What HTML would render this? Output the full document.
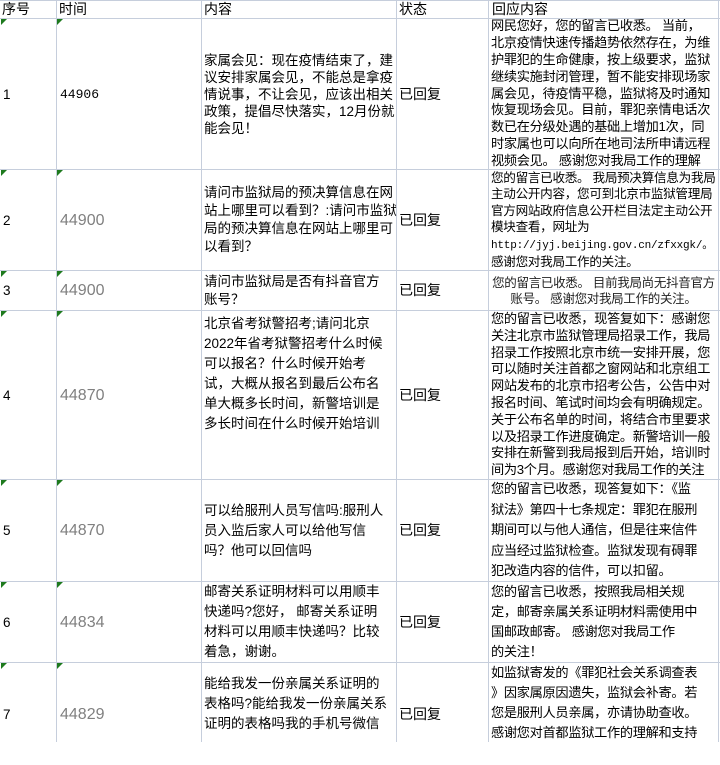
<!DOCTYPE html>
<html><head><meta charset="utf-8"><style>
body{margin:0;width:720px;height:742px;background:#fff;overflow:hidden;position:relative;font-family:"Liberation Sans","Noto Sans CJK SC",sans-serif;color:#000}
.h{position:absolute;left:0;width:720px;height:1px;background:#c6cedc}
.v{position:absolute;top:0;height:742px;width:1px;background:#c6cedc}
.c{position:absolute;display:flex;align-items:center;font-size:13.5px;line-height:17px;white-space:nowrap;overflow:hidden}
.t{position:absolute;width:0;height:0;border-top:6px solid #1e7a1e;border-right:6px solid transparent}
.g{color:#808080;font-size:16px}
.r{font-size:13.2px;letter-spacing:-0.3px;width:228px}
</style></head><body>
<div class="h" style="top:0"></div>
<div class="h" style="top:18px"></div>
<div class="h" style="top:169px"></div>
<div class="h" style="top:270px"></div>
<div class="h" style="top:310px"></div>
<div class="h" style="top:479px"></div>
<div class="h" style="top:581px"></div>
<div class="h" style="top:662px"></div>
<div class="v" style="left:56px"></div>
<div class="v" style="left:201px"></div>
<div class="v" style="left:396px"></div>
<div class="v" style="left:488px"></div>
<div class="v" style="left:718px"></div>

<div class="c" style="left:2px;top:0;height:18px;font-size:14px">序号</div>
<div class="c" style="left:59px;top:0;height:18px;font-size:14px">时间</div>
<div class="c" style="left:204px;top:0;height:18px;font-size:14px">内容</div>
<div class="c" style="left:399px;top:0;height:18px;font-size:14px">状态</div>
<div class="c" style="left:492px;top:0;height:18px;font-size:14px">回应内容</div>

<div class="t" style="left:1px;top:19px"></div><div class="t" style="left:57px;top:19px"></div>
<div class="t" style="left:1px;top:170px"></div><div class="t" style="left:57px;top:170px"></div>
<div class="t" style="left:1px;top:271px"></div><div class="t" style="left:57px;top:271px"></div>
<div class="t" style="left:1px;top:311px"></div><div class="t" style="left:57px;top:311px"></div>
<div class="t" style="left:1px;top:480px"></div><div class="t" style="left:57px;top:480px"></div>
<div class="t" style="left:1px;top:582px"></div><div class="t" style="left:57px;top:582px"></div>
<div class="t" style="left:1px;top:663px"></div><div class="t" style="left:57px;top:663px"></div>

<!-- row1 -->
<div class="c" style="left:3px;top:19px;height:150px">1</div>
<div class="c" style="left:60px;top:19px;height:150px;font-family:'Liberation Mono',monospace;font-size:13px">44906</div>
<div class="c" style="left:204px;top:19px;height:150px">家属会见：现在疫情结束了，建<br>议安排家属会见，不能总是拿疫<br>情说事，不让会见，应该出相关<br>政策，提倡尽快落实，12月份就<br>能会见！</div>
<div class="c" style="left:399px;top:19px;height:150px;font-size:14px">已回复</div>
<div class="c r" style="left:491px;top:19px;height:150px;line-height:16.8px">网民您好，您的留言已收悉。 当前，<br>北京疫情快速传播趋势依然存在，为维<br>护罪犯的生命健康，按上级要求，监狱<br>继续实施封闭管理，暂不能安排现场家<br>属会见，待疫情平稳，监狱将及时通知<br>恢复现场会见。目前，罪犯亲情电话次<br>数已在分级处遇的基础上增加1次，同<br>时家属也可以向所在地司法所申请远程<br>视频会见。 感谢您对我局工作的理解</div>

<!-- row2 -->
<div class="c" style="left:3px;top:170px;height:100px">2</div>
<div class="c g" style="left:60px;top:170px;height:100px">44900</div>
<div class="c" style="left:204px;top:170px;height:100px;line-height:18px">请问市监狱局的预决算信息在网<br>站上哪里可以看到？:请问市监狱<br>局的预决算信息在网站上哪里可<br>以看到？</div>
<div class="c" style="left:399px;top:170px;height:100px;font-size:14px">已回复</div>
<div class="c r" style="left:491px;top:170px;height:100px;line-height:16.5px;font-size:12.6px"><div>您的留言已收悉。 我局预决算信息为我局<br>主动公开内容，您可到北京市监狱管理局<br>官方网站政府信息公开栏目法定主动公开<br>模块查看，网址为<br><span style="font-family:'Liberation Mono',monospace;font-size:11px;letter-spacing:-0.2px">http://jyj.beijing.gov.cn/zfxxgk/。</span><br>感谢您对我局工作的关注。</div></div>

<!-- row3 -->
<div class="c" style="left:3px;top:271px;height:39px">3</div>
<div class="c g" style="left:60px;top:271px;height:39px">44900</div>
<div class="c" style="left:204px;top:271px;height:39px;line-height:18px">请问市监狱局是否有抖音官方<br>账号？</div>
<div class="c" style="left:399px;top:271px;height:39px;font-size:14px">已回复</div>
<div class="c" style="left:489px;top:271px;width:229px;height:39px;justify-content:center;text-align:center;font-size:12.5px;letter-spacing:-0.3px;line-height:16px;color:#222">您的留言已收悉。 目前我局尚无抖音官方<br>账号。 感谢您对我局工作的关注。</div>

<!-- row4 -->
<div class="c" style="left:3px;top:311px;height:168px">4</div>
<div class="c g" style="left:60px;top:311px;height:168px">44870</div>
<div class="c" style="left:204px;top:311px;height:168px;line-height:20px;align-items:flex-start;padding-top:3px">北京省考狱警招考;请问北京<br>2022年省考狱警招考什么时候<br>可以报名？什么时候开始考<br>试，大概从报名到最后公布名<br>单大概多长时间，新警培训是<br>多长时间在什么时候开始培训</div>
<div class="c" style="left:399px;top:311px;height:168px;font-size:14px">已回复</div>
<div class="c r" style="left:491px;top:311px;height:168px;line-height:16.8px">您的留言已收悉，现答复如下：感谢您<br>关注北京市监狱管理局招录工作，我局<br>招录工作按照北京市统一安排开展，您<br>可以随时关注首都之窗网站和北京组工<br>网站发布的北京市招考公告，公告中对<br>报名时间、笔试时间均会有明确规定。<br>关于公布名单的时间，将结合市里要求<br>以及招录工作进度确定。新警培训一般<br>安排在新警到我局报到后开始，培训时<br>间为3个月。感谢您对我局工作的关注</div>

<!-- row5 -->
<div class="c" style="left:3px;top:480px;height:101px">5</div>
<div class="c g" style="left:60px;top:480px;height:101px">44870</div>
<div class="c" style="left:204px;top:480px;height:101px;line-height:20px">可以给服刑人员写信吗:服刑人<br>员入监后家人可以给他写信<br>吗？他可以回信吗</div>
<div class="c" style="left:399px;top:480px;height:101px;font-size:14px">已回复</div>
<div class="c r" style="left:491px;top:480px;height:101px;line-height:20.5px">您的留言已收悉，现答复如下：《监<br>狱法》第四十七条规定：罪犯在服刑<br>期间可以与他人通信，但是往来信件<br>应当经过监狱检查。监狱发现有碍罪<br>犯改造内容的信件，可以扣留。</div>

<!-- row6 -->
<div class="c" style="left:3px;top:582px;height:80px">6</div>
<div class="c g" style="left:60px;top:582px;height:80px">44834</div>
<div class="c" style="left:204px;top:582px;height:80px;line-height:20px">邮寄关系证明材料可以用顺丰<br>快递吗?您好， 邮寄关系证明<br>材料可以用顺丰快递吗？比较<br>着急，谢谢。</div>
<div class="c" style="left:399px;top:582px;height:80px;font-size:14px">已回复</div>
<div class="c r" style="left:491px;top:582px;height:80px;line-height:20px">您的留言已收悉，按照我局相关规<br>定，邮寄亲属关系证明材料需使用中<br>国邮政邮寄。 感谢您对我局工作<br>的关注！</div>

<!-- row7 -->
<div class="c" style="left:3px;top:663px;height:102px">7</div>
<div class="c g" style="left:60px;top:663px;height:102px">44829</div>
<div class="c" style="left:204px;top:663px;height:102px;line-height:20px">能给我发一份亲属关系证明的<br>表格吗?能给我发一份亲属关系<br>证明的表格吗我的手机号微信<br>&nbsp;</div>
<div class="c" style="left:399px;top:663px;height:102px;font-size:14px">已回复</div>
<div class="c r" style="left:491px;top:663px;height:80px;line-height:20px;align-items:flex-start">如监狱寄发的《罪犯社会关系调查表<br>》因家属原因遗失，监狱会补寄。若<br>您是服刑人员亲属，亦请协助查收。<br>感谢您对首都监狱工作的理解和支持</div>
</body></html>
